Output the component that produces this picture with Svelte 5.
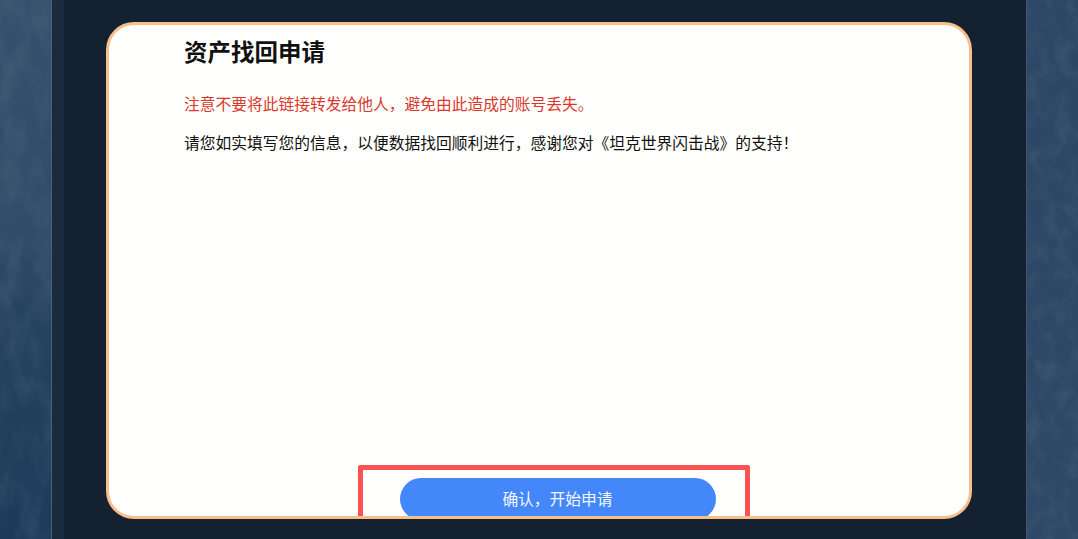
<script lang="ts">
  let title = "资产找回申请";
  let warning = "注意不要将此链接转发给他人，避免由此造成的账号丢失。";
  let notice = "请您如实填写您的信息，以便数据找回顺利进行，感谢您对《坦克世界闪击战》的支持！";
</script>

<main>
  <div class="side left">
    <svg class="grain" aria-hidden="true">
      <filter id="grain-left">
        <feTurbulence type="fractalNoise" baseFrequency="0.05 0.025" numOctaves="4" seed="7" />
        <feColorMatrix values="0 0 0 0 0.55  0 0 0 0 0.65  0 0 0 0 0.78  1.6 0 0 0 -0.62" />
      </filter>
      <rect width="100%" height="100%" filter="url(#grain-left)" />
    </svg>
  </div>
  <div class="panel">
    <div class="rail"></div>
    <section class="card">
      <div class="content">
        <h1>{title}</h1>
        <p class="warning">{warning}</p>
        <p class="notice">{notice}</p>
      </div>
      <div class="actions">
        <button>确认，开始申请</button>
        <!-- Red annotation frame over the button. -->
        <div class="frame"></div>
      </div>
    </section>
  </div>
  <div class="side right">
    <svg class="grain" aria-hidden="true">
      <filter id="grain-right">
        <feTurbulence type="fractalNoise" baseFrequency="0.07 0.05" numOctaves="4" seed="21" />
        <feColorMatrix values="0 0 0 0 0.5  0 0 0 0 0.62  0 0 0 0 0.75  1.4 0 0 0 -0.58" />
      </filter>
      <rect width="100%" height="100%" filter="url(#grain-right)" />
    </svg>
  </div>
</main>

<style>
  :global(body) {
    margin: 0;
    background-color: #142131;
  }

  main {
    height: 539px;
    width: 1078px;
    display: flex;
    overflow: hidden;

    font-family: "Noto Sans CJK SC", "Liberation Sans", sans-serif;
  }

  .side {
    width: 52px;
    flex: none;
    box-sizing: border-box;
  }

  .side.left {
    border-right: 1px solid #4a6178;
    background-image: linear-gradient(180deg, #35506c 0%, #314b68 45%, #26435f 58%, #1c3a5a 100%);
  }

  .side.right {
    border-left: 1px solid #43586f;
    background-image: linear-gradient(180deg, #2d4866 0%, #2e4967 100%);
  }

  .grain {
    display: block;
    width: 100%;
    height: 100%;
    opacity: 0.12;
  }

  .panel {
    flex: 1;
    display: flex;
    background-color: #142131;
  }

  .rail {
    width: 12px;
    flex: none;
    background-color: #1a2b3e;
  }

  .card {
    width: 866px;
    height: 497px;
    margin: 22px 0 0 42px;
    box-sizing: border-box;
    display: flex;
    flex-direction: column;
    overflow: hidden;

    border: 3px solid #f9bf8b;
    border-radius: 28px;
    background-color: #fffffd;
  }

  .content {
    flex: 1;
    padding-left: 75px;
    color: #111;
  }

  h1 {
    margin: 10px 0 0;
    font-size: 23.5px;
    line-height: 33px;
    font-weight: 700;
  }

  p {
    margin: 0;
    font-size: 15.75px;
    line-height: 22px;
  }

  .warning {
    margin-top: 25px;
    color: #d9382c;
  }

  .notice {
    margin-top: 17px;
  }

  .actions {
    position: relative;
    height: 38px;
    display: flex;
    justify-content: center;
    flex: none;
  }

  button {
    width: 316px;
    height: 42px;
    margin-left: 37px;
    padding: 0 0 2px;
    border: 0;
    border-radius: 21px;
    font-family: inherit;
    font-size: 15.75px;
    color: #f4f8ff;
    background-color: #4487fb;
  }

  .frame {
    position: absolute;
    left: 249px;
    top: -13px;
    width: 392px;
    height: 70px;
    box-sizing: border-box;
    border: 5px solid #fb5254;
    border-radius: 2px;
  }
</style>
